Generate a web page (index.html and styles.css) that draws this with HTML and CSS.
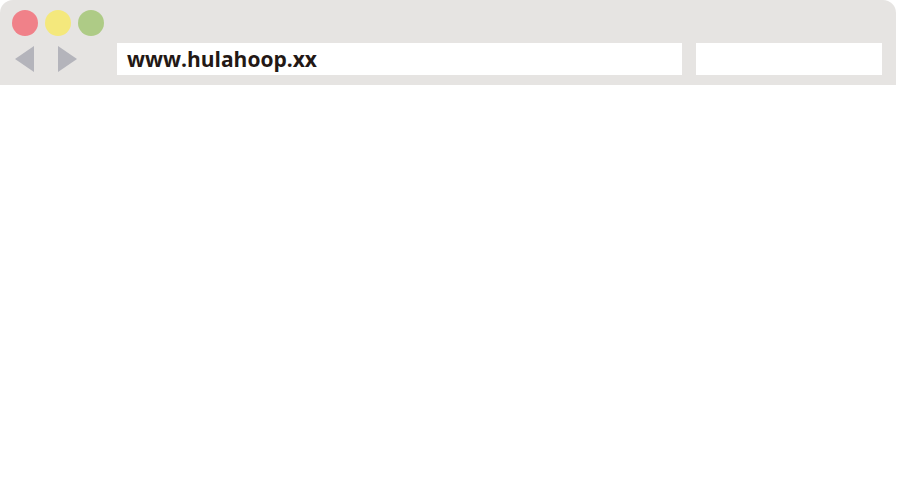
FILE: index.html
```html
<!DOCTYPE html>
<html>
<head>
<meta charset="utf-8">
<link rel="stylesheet" href="styles.css">
</head>
<body>
<div class="window">
  <div class="toolbar">
    <div class="lights">
      <span class="dot red"></span>
      <span class="dot yellow"></span>
      <span class="dot green"></span>
    </div>
    <div class="navrow">
      <div class="arrows">
        <svg class="arrow" width="19" height="26" viewBox="0 0 19 26"><polygon points="19,0 19,26 0,13" fill="#b4b4bb"/></svg>
        <svg class="arrow" width="19" height="26" viewBox="0 0 19 26"><polygon points="0,0 0,26 19,13" fill="#b4b4bb"/></svg>
      </div>
      <div class="url">www.hulahoop.xx</div>
      <div class="search"></div>
    </div>
  </div>
  <div class="content"></div>
</div>
</body>
</html>
```

FILE: styles.css
```css
html, body {
  margin: 0;
  padding: 0;
  background: #ffffff;
}
.window {
  width: 896px;
  height: 500px;
}
.toolbar {
  background: #e6e4e2;
  height: 85px;
  border-radius: 13px 13px 0 0;
  box-sizing: border-box;
  padding-top: 10px;
}
.lights {
  display: flex;
  gap: 7px;
  padding-left: 12px;
  height: 26px;
}
.dot {
  width: 26px;
  height: 26px;
  border-radius: 50%;
  display: block;
}
.red { background: #f08189; }
.yellow { background: #f4e87c; }
.green { background: #aecb86; }
.navrow {
  display: flex;
  align-items: center;
  margin-top: 7px;
  height: 32px;
}
.arrows {
  display: flex;
  gap: 24px;
  padding-left: 15px;
  width: 117px;
  flex-shrink: 0;
  box-sizing: border-box;
}
.arrow { display: block; }
.url {
  width: 565px;
  height: 32px;
  background: #ffffff;
  box-sizing: border-box;
  padding-left: 10px;
  font-family: "Open Sans", "DejaVu Sans", sans-serif;
  font-weight: 700;
  font-size: 21px;
  line-height: 32px;
  color: #231815;
}
.search {
  width: 186px;
  height: 32px;
  margin-left: 14px;
  background: #ffffff;
}
```
